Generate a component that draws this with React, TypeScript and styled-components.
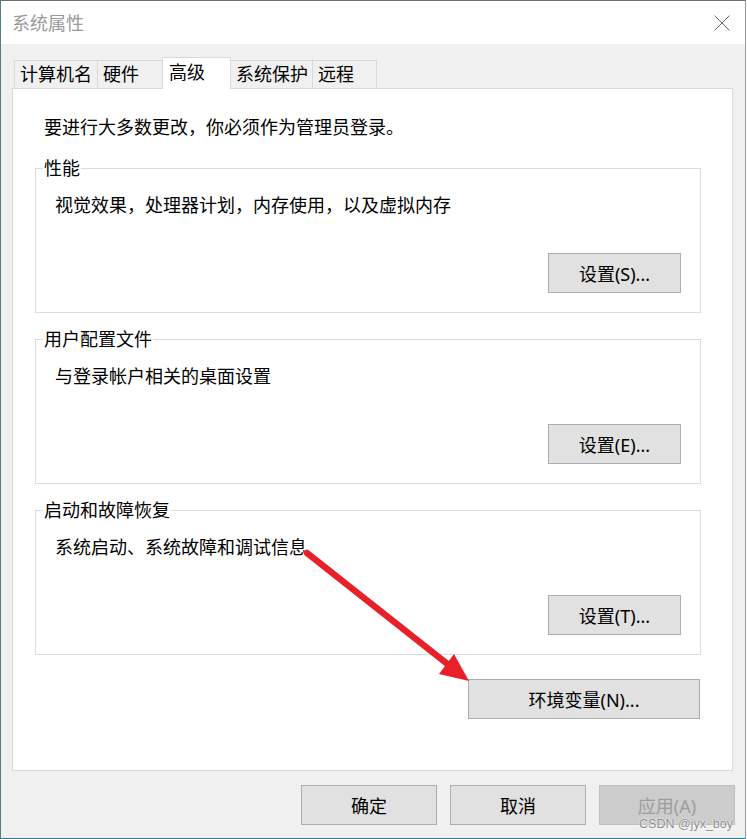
import React from "react";
import styled, { createGlobalStyle, css } from "styled-components";

const GlobalStyle = createGlobalStyle`
  html, body {
    margin: 0;
    padding: 0;
    background: #ffffff;
  }
  body {
    font-family: "Noto Sans", "Noto Sans CJK SC", sans-serif;
  }
  * { box-sizing: border-box; }
`;

const FONT = `"Noto Sans", "Noto Sans CJK SC", sans-serif`;

const Window = styled.div`
  position: relative;
  width: 746px;
  height: 839px;
  display: flex;
  flex-direction: column;
  border-top: 1px solid #6e6e6e;
  border-left: 1px solid #4f7f82;
  border-right: 1px solid #9a9a9a;
  border-bottom: 1px solid #1f7f80;
  background: #f0f0f0;
  font-family: ${FONT};
  overflow: hidden;
`;

const TitleBar = styled.div`
  height: 43px;
  flex: none;
  background: #ffffff;
  display: flex;
  align-items: center;
  justify-content: space-between;
  padding: 0 15px 0 11px;
`;

const Title = styled.span`
  font-size: 18px;
  line-height: 24px;
  color: #999999;
`;

const CloseIcon = styled.svg`
  display: block;
  width: 16px;
  height: 16px;
`;

const Body = styled.div`
  flex: 1;
  display: flex;
  flex-direction: column;
  padding: 13px 10px 13px 11px;
`;

const TabStrip = styled.div`
  display: flex;
  align-items: flex-end;
  height: 31px;
  margin-left: 2px;
`;

const Tab = styled.div<{ $width: number; $active?: boolean }>`
  position: relative;
  width: ${(p) => p.$width}px;
  height: 28px;
  padding: 0 5px;
  border: 1px solid #d9d9d9;
  border-bottom: none;
  background: #f0f0f0;
  font-size: 18px;
  line-height: 27px;
  color: #000000;
  white-space: nowrap;
  & + & {
    margin-left: -1px;
  }
  ${(p) =>
    p.$active &&
    css`
      && {
        margin-left: 0;
      }
      height: 32px;
      margin-bottom: -1px;
      padding: 0 6px 1px;
      background: #ffffff;
      z-index: 1;
      line-height: 29px;
    `}
`;

const Panel = styled.div`
  height: 683px;
  flex: none;
  margin-right: 2px;
  background: #ffffff;
  border: 1px solid #d9d9d9;
  padding: 26px 31px 0 22px;
  display: flex;
  flex-direction: column;
`;

const Intro = styled.div`
  font-size: 18px;
  line-height: 24px;
  color: #000;
  padding-left: 9px;
  margin-bottom: 17px;
`;

const Group = styled.fieldset`
  margin: 0;
  padding: 0 19px 19px 7px;
  border: 1px solid #dcdcdc;
  min-inline-size: 0;
  & + & {
    margin-top: 14px;
  }
`;

const Legend = styled.legend`
  padding: 0 1px;
  font-size: 18px;
  line-height: 24px;
  color: #000;
`;

const Desc = styled.div`
  margin-top: 13px;
  padding-left: 12px;
  font-size: 18px;
  line-height: 24px;
  color: #000;
`;

const ButtonRow = styled.div<{ $top: number; $right?: number }>`
  display: flex;
  justify-content: flex-end;
  margin-top: ${(p) => p.$top}px;
  padding-right: ${(p) => p.$right ?? 0}px;
`;

const Button = styled.button<{ $width: number; $disabled?: boolean }>`
  width: ${(p) => p.$width}px;
  height: 40px;
  margin: 0;
  padding: 2px 0 0;
  border: 1px solid #adadad;
  background: #e1e1e1;
  color: #000;
  font-family: ${FONT};
  font-size: 18px;
  line-height: 24px;
  border-radius: 0;
  cursor: default;
  ${(p) =>
    p.$disabled &&
    css`
      border-color: #bfbfbf;
      background: #cccccc;
      color: #9d9d9d;
    `}
`;

const Footer = styled.div`
  display: flex;
  justify-content: flex-end;
  gap: 13px;
  margin-top: 14px;
`;

const ArrowOverlay = styled.svg`
  position: absolute;
  left: -1px;
  top: -1px;
  width: 747px;
  height: 839px;
  pointer-events: none;
`;

const Watermark = styled.span`
  position: absolute;
  right: 12px;
  bottom: 7px;
  font-family: "Liberation Sans", Arial, sans-serif;
  font-size: 12.5px;
  line-height: 14px;
  color: #8c8c8c;
  text-shadow: 0 0 1px #ffffff, 0 0 2px #ffffff;
`;

type GroupDef = { legend: string; desc: string; button: string };

const groups: GroupDef[] = [
  { legend: "性能", desc: "视觉效果，处理器计划，内存使用，以及虚拟内存", button: "设置(S)..." },
  { legend: "用户配置文件", desc: "与登录帐户相关的桌面设置", button: "设置(E)..." },
  { legend: "启动和故障恢复", desc: "系统启动、系统故障和调试信息", button: "设置(T)..." },
];

const tabs = [
  { label: "计算机名", width: 84 },
  { label: "硬件", width: 66 },
  { label: "高级", width: 69, active: true },
  { label: "系统保护", width: 83 },
  { label: "远程", width: 65 },
];

export default function App() {
  return (
    <>
      <GlobalStyle />
      <Window>
        <TitleBar>
          <Title>系统属性</Title>
          <CloseIcon viewBox="0 0 16 16">
            <path d="M0.5 0.5 L15.5 15.5 M15.5 0.5 L0.5 15.5" stroke="#6a6a6a" strokeWidth="1" fill="none" />
          </CloseIcon>
        </TitleBar>
        <Body>
          <TabStrip>
            {tabs.map((t) => (
              <Tab key={t.label} $width={t.width} $active={t.active}>
                {t.label}
              </Tab>
            ))}
          </TabStrip>
          <Panel>
            <Intro>要进行大多数更改，你必须作为管理员登录。</Intro>
            {groups.map((g) => (
              <Group key={g.legend}>
                <Legend>{g.legend}</Legend>
                <Desc>{g.desc}</Desc>
                <ButtonRow $top={36}>
                  <Button $width={133}>{g.button}</Button>
                </ButtonRow>
              </Group>
            ))}
            <ButtonRow $top={24} $right={1}>
              <Button $width={232}>环境变量(N)...</Button>
            </ButtonRow>
          </Panel>
          <Footer>
            <Button $width={136}>确定</Button>
            <Button $width={136}>取消</Button>
            <Button $width={136} $disabled>
              应用(A)
            </Button>
          </Footer>
        </Body>
        <ArrowOverlay viewBox="0 0 747 839">
          <line x1="307" y1="553" x2="450" y2="666" stroke="#e8202a" strokeWidth="6.5" strokeLinecap="round" />
          <polygon points="469,681 439,674 454,654" fill="#e8202a" />
        </ArrowOverlay>
        <Watermark>CSDN @jyx_boy</Watermark>
      </Window>
    </>
  );
}
